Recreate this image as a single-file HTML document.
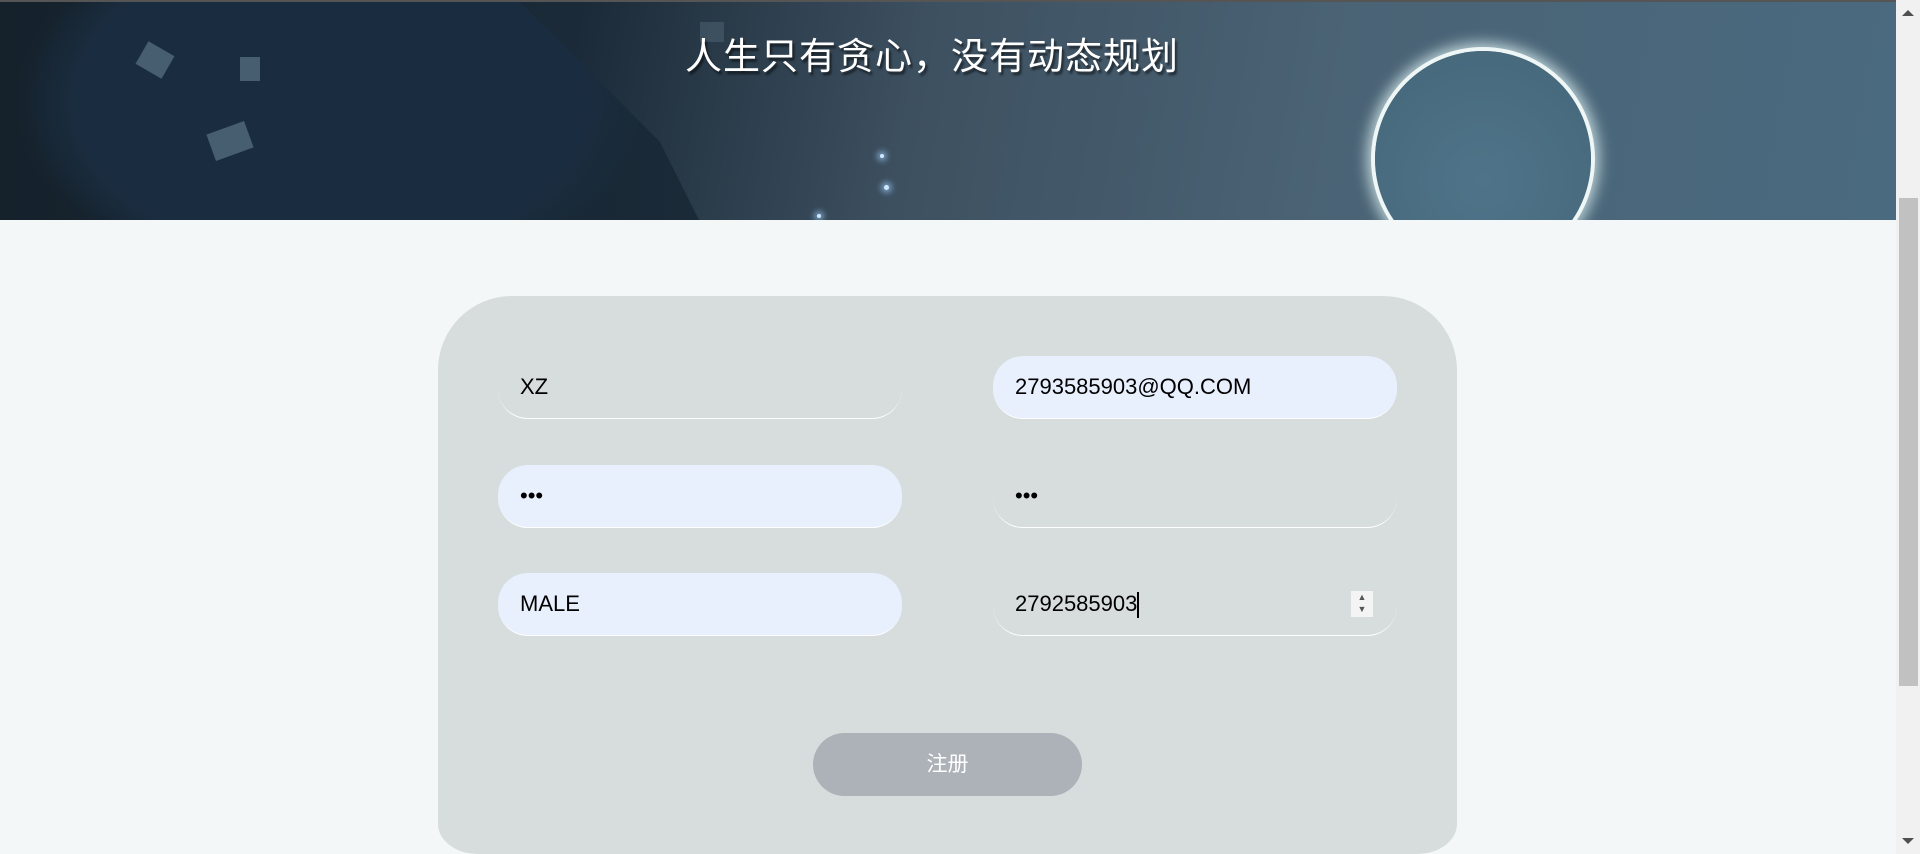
<!DOCTYPE html>
<html><head><meta charset="utf-8">
<style>
*{margin:0;padding:0;box-sizing:border-box}
html,body{width:1920px;height:854px;overflow:hidden;background:#f3f7f8;font-family:"Liberation Sans","Noto Sans CJK SC",sans-serif}
.wrap{position:relative;width:1920px;height:854px;overflow:hidden}
.hdr{position:absolute;left:0;top:0;width:1896px;height:220px;overflow:hidden;
background:linear-gradient(100deg,#17222d 0%,#1b2a38 30%,#3d5060 48%,#4a6375 70%,#4a6a80 100%);border-top:2px solid #555}
.tree{position:absolute;left:0;top:0;width:720px;height:220px;
background:radial-gradient(ellipse 420px 260px at 330px 100px,#1a2d40 60%,rgba(26,45,64,0) 75%),linear-gradient(90deg,#15212b,#1a2a38);
clip-path:polygon(0 0,520px 0,560px 40px,610px 90px,660px 140px,700px 220px,0 220px)}
.leaf{position:absolute;background:#5a7385;opacity:.7}
.ring{position:absolute;left:1375px;top:49px;width:216px;height:216px;border-radius:50%;
background:radial-gradient(circle at 50% 60%,#4f7489,#456679);
box-shadow:0 0 0 4px #eef6f6,0 0 14px 8px rgba(220,240,240,.8)}
.star{position:absolute;width:5px;height:5px;border-radius:50%;background:#cfe8ff;box-shadow:0 0 6px 3px rgba(160,210,255,.6)}
.title{position:absolute;left:0;width:1864px;top:24px;text-align:center;color:#fff;font-size:37px;letter-spacing:1px;text-shadow:2px 3px 2px rgba(0,0,0,.55)}
.card{position:absolute;left:438px;top:296px;width:1019px;height:558px;border-radius:74px 74px 40px 40px/74px 74px 30px 30px;background:#d7dddd}
.in{position:absolute;width:404px;height:63px;border-radius:30px;border-bottom:1.5px solid #fff;font-size:22px;color:#000;padding-left:22px;line-height:62px}
.f{background:#e8f0fe}
.btn{position:absolute;left:813px;top:733px;width:269px;height:63px;border-radius:32px;background:#adb1b8;color:#fff;font-size:21px;text-align:center;line-height:63px}
.sb{position:absolute;left:1896px;top:0;width:24px;height:854px;background:#f1f1f1}
.th{position:absolute;left:1899px;top:198px;width:19px;height:488px;background:#c1c1c1}
</style></head><body><div class="wrap">
<div class="hdr">
<div class="tree"></div>
<div class="leaf" style="left:140px;top:45px;width:30px;height:26px;transform:rotate(30deg)"></div>
<div class="leaf" style="left:210px;top:125px;width:40px;height:28px;transform:rotate(-20deg)"></div>
<div class="leaf" style="left:240px;top:55px;width:20px;height:24px"></div>
<div class="leaf" style="left:700px;top:20px;width:24px;height:20px;opacity:.4"></div>
<div class="ring"></div>
<div class="star" style="left:880px;top:152px;width:4px;height:4px"></div>
<div class="star" style="left:884px;top:183px"></div>
<div class="star" style="left:817px;top:212px;width:4px;height:4px"></div>
<div class="title">人生只有贪心，没有动态规划</div>
</div>
<div class="card"></div>
<div class="in" style="left:498px;top:356px">XZ</div>
<div class="in f" style="left:993px;top:356px">2793585903@QQ.COM</div>
<div class="in f" style="left:498px;top:465px">•••</div>
<div class="in" style="left:993px;top:465px">•••</div>
<div class="in f" style="left:498px;top:573px">MALE</div>
<div class="in" style="left:993px;top:573px">2792585903<span style="display:inline-block;width:2px;height:26px;background:#000;vertical-align:middle"></span>
<div style="position:absolute;right:24px;top:18px;width:22px;height:26px;background:#f4f4f4;font-size:9px;line-height:12px;text-align:center;color:#555">▲<br>▼</div></div>
<div class="btn">注册</div>
<div class="sb"></div>
<div class="th"></div>
<div style="position:absolute;left:1902px;top:10px;width:0;height:0;border-left:6px solid transparent;border-right:6px solid transparent;border-bottom:6px solid #505050"></div>
<div style="position:absolute;left:1902px;top:838px;width:0;height:0;border-left:6px solid transparent;border-right:6px solid transparent;border-top:6px solid #505050"></div>
</div></body></html>
